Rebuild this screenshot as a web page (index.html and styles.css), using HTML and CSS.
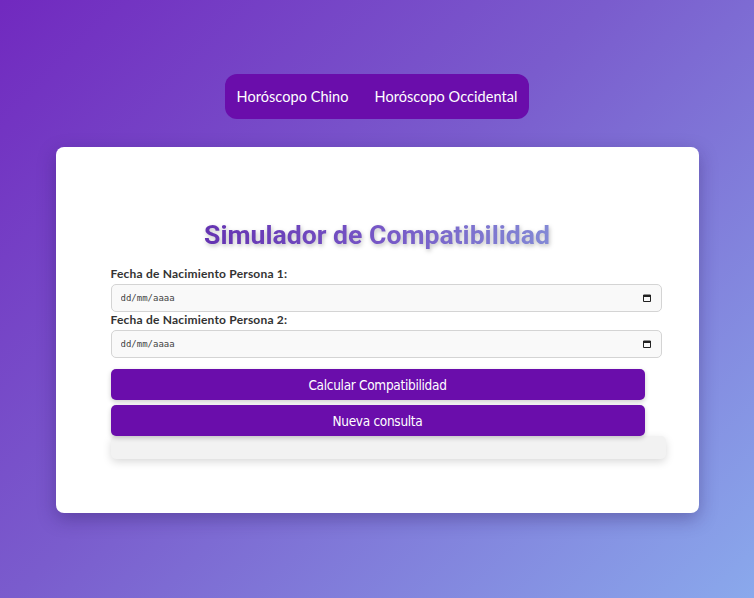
FILE: index.html
```html
<!DOCTYPE html>
<html lang="es">
<head>
<meta charset="utf-8">
<title>Simulador de Compatibilidad</title>
<link rel="stylesheet" href="styles.css">
</head>
<body>
  <nav class="nav">
    <a class="nav-link" href="#">Horóscopo Chino</a>
    <a class="nav-link" href="#">Horóscopo Occidental</a>
  </nav>
  <main class="card">
    <h1 class="title">Simulador de Compatibilidad</h1>
    <form class="form">
      <label class="label" for="f1">Fecha de Nacimiento Persona 1:</label>
      <div class="field">
        <input class="input" id="f1" type="text" placeholder="dd/mm/aaaa">
        <svg class="cal" viewBox="0 0 10 10" width="10" height="10"><path d="M1.5 2h7v6.5h-7z" fill="none" stroke="#222" stroke-width="1"/><path d="M1.5 2h7v2h-7z" fill="#222"/></svg>
      </div>
      <label class="label" for="f2">Fecha de Nacimiento Persona 2:</label>
      <div class="field">
        <input class="input" id="f2" type="text" placeholder="dd/mm/aaaa">
        <svg class="cal" viewBox="0 0 10 10" width="10" height="10"><path d="M1.5 2h7v6.5h-7z" fill="none" stroke="#222" stroke-width="1"/><path d="M1.5 2h7v2h-7z" fill="#222"/></svg>
      </div>
      <button class="btn btn-first" type="button">Calcular Compatibilidad</button>
      <button class="btn" type="reset">Nueva consulta</button>
    </form>
    <div class="result"></div>
  </main>
</body>
</html>
```
FILE: styles.css
```css
* { box-sizing: border-box; }
html, body { margin: 0; padding: 0; }
body {
  min-height: 598px;
  background: linear-gradient(135deg, #7129bf 0%, #7a5ccd 45%, #8aa9ec 100%);
  font-family: "Lato", "Open Sans", sans-serif;
  display: flex;
  flex-direction: column;
  align-items: center;
  padding-top: 74px;
}
.nav {
  display: flex;
  gap: 26px;
  background: #6a0dab;
  border-radius: 12px;
  padding: 0 12px;
  height: 45px;
  align-items: center;
}
.nav-link {
  color: #fff;
  text-decoration: none;
  font-size: 14.5px;
  letter-spacing: 0.05px;
}
.card {
  margin-top: 28px;
  width: 643px;
  height: 366px;
  background: #fff;
  border-radius: 8px;
  box-shadow: 0 6px 18px rgba(40, 20, 90, 0.35);
  padding: 71px 55px 0 55px;
}
.title {
  margin: 0 0 15px 0;
  text-align: center;
  font-family: "Roboto", sans-serif;
  font-weight: 700;
  font-size: 26.6px;
  line-height: 34px;
  background: linear-gradient(90deg, #5a1fa6 0%, #7656c6 50%, #8aa5de 100%);
  -webkit-background-clip: text;
  background-clip: text;
  color: transparent;
  filter: drop-shadow(1px 2px 2px rgba(0,0,0,0.25));
}
.form {
  position: relative;
  z-index: 1;
  display: flex;
  flex-direction: column;
}
.label {
  font-size: 12px;
  font-weight: 700;
  color: #333;
  line-height: 13px;
  margin-bottom: 4px;
  letter-spacing: 0.2px;
}
.field {
  position: relative;
  width: 551px;
  margin-bottom: 1px;
}
.input {
  width: 100%;
  height: 28px;
  border: 1px solid #d4d4d4;
  border-radius: 5px;
  background: #f9f9f9;
  padding: 0 9px;
  font-family: "DejaVu Sans Mono", monospace;
  font-size: 9px;
  color: #333;
}
.input::placeholder { color: #444; }
.cal {
  position: absolute;
  right: 10px;
  top: 9px;
}
.btn {
  width: 534px;
  height: 31px;
  border: none;
  border-radius: 5px;
  background: #6a0dab;
  color: #fff;
  font-family: "DejaVu Sans", sans-serif;
  font-stretch: condensed;
  font-size: 13.5px;
  letter-spacing: -0.3px;
  box-shadow: 0 2px 5px rgba(0,0,0,0.2);
  margin-bottom: 5px;
  padding: 0;
}
.btn-first { margin-top: 10px; }
.result {
  position: relative;
  z-index: 0;
  width: 555px;
  height: 23px;
  margin-top: -5px;
  background: #f2f2f2;
  border-radius: 5px;
  box-shadow: 0 3px 8px rgba(0,0,0,0.15);
}
```
